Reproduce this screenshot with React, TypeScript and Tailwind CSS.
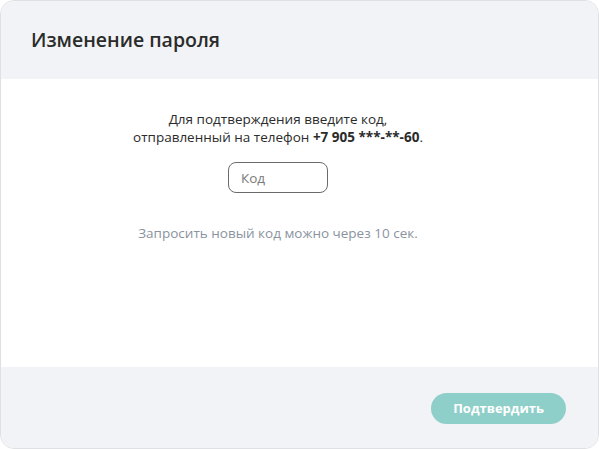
export default function App() {
  return (
    <div className="w-[599px] h-[449px] bg-white" style={{ fontFamily: '"Open Sans", sans-serif' }}>
      <div className="flex h-full w-full flex-col overflow-hidden rounded-[14px] border border-[#dfe0e3]">
        <div className="flex h-[78px] shrink-0 items-center bg-[#f2f3f6] pl-[30px]">
          <h1 className="text-[19.5px] font-semibold text-[#2b2b2b]">Изменение пароля</h1>
        </div>
        <div className="flex flex-1 flex-col items-center pr-[43px] pt-[31px]">
          <p className="text-center text-[13.5px] leading-[18px] text-[#2b2b2b]">
            Для подтверждения введите код,
            <br />
            отправленный на телефон <b className="font-bold">+7 905 ***-**-60</b>.
          </p>
          <input
            placeholder="Код"
            className="mt-[16px] h-[31px] w-[100px] rounded-[8px] border border-[#6b6b6b] px-[12px] text-[13.5px] text-[#2b2b2b] outline-none placeholder:text-[#7a7a7a]"
          />
          <p className="mt-[30px] text-[13.5px] text-[#8a93a0]">Запросить новый код можно через 10 сек.</p>
        </div>
        <div className="flex h-[81px] shrink-0 items-start justify-end bg-[#f2f3f6] pr-[32px] pt-[26px]">
          <button className="h-[31px] rounded-full bg-[#8fcfc9] px-[22px] text-[13px] font-bold text-white">
            Подтвердить
          </button>
        </div>
      </div>
    </div>
  );
}
